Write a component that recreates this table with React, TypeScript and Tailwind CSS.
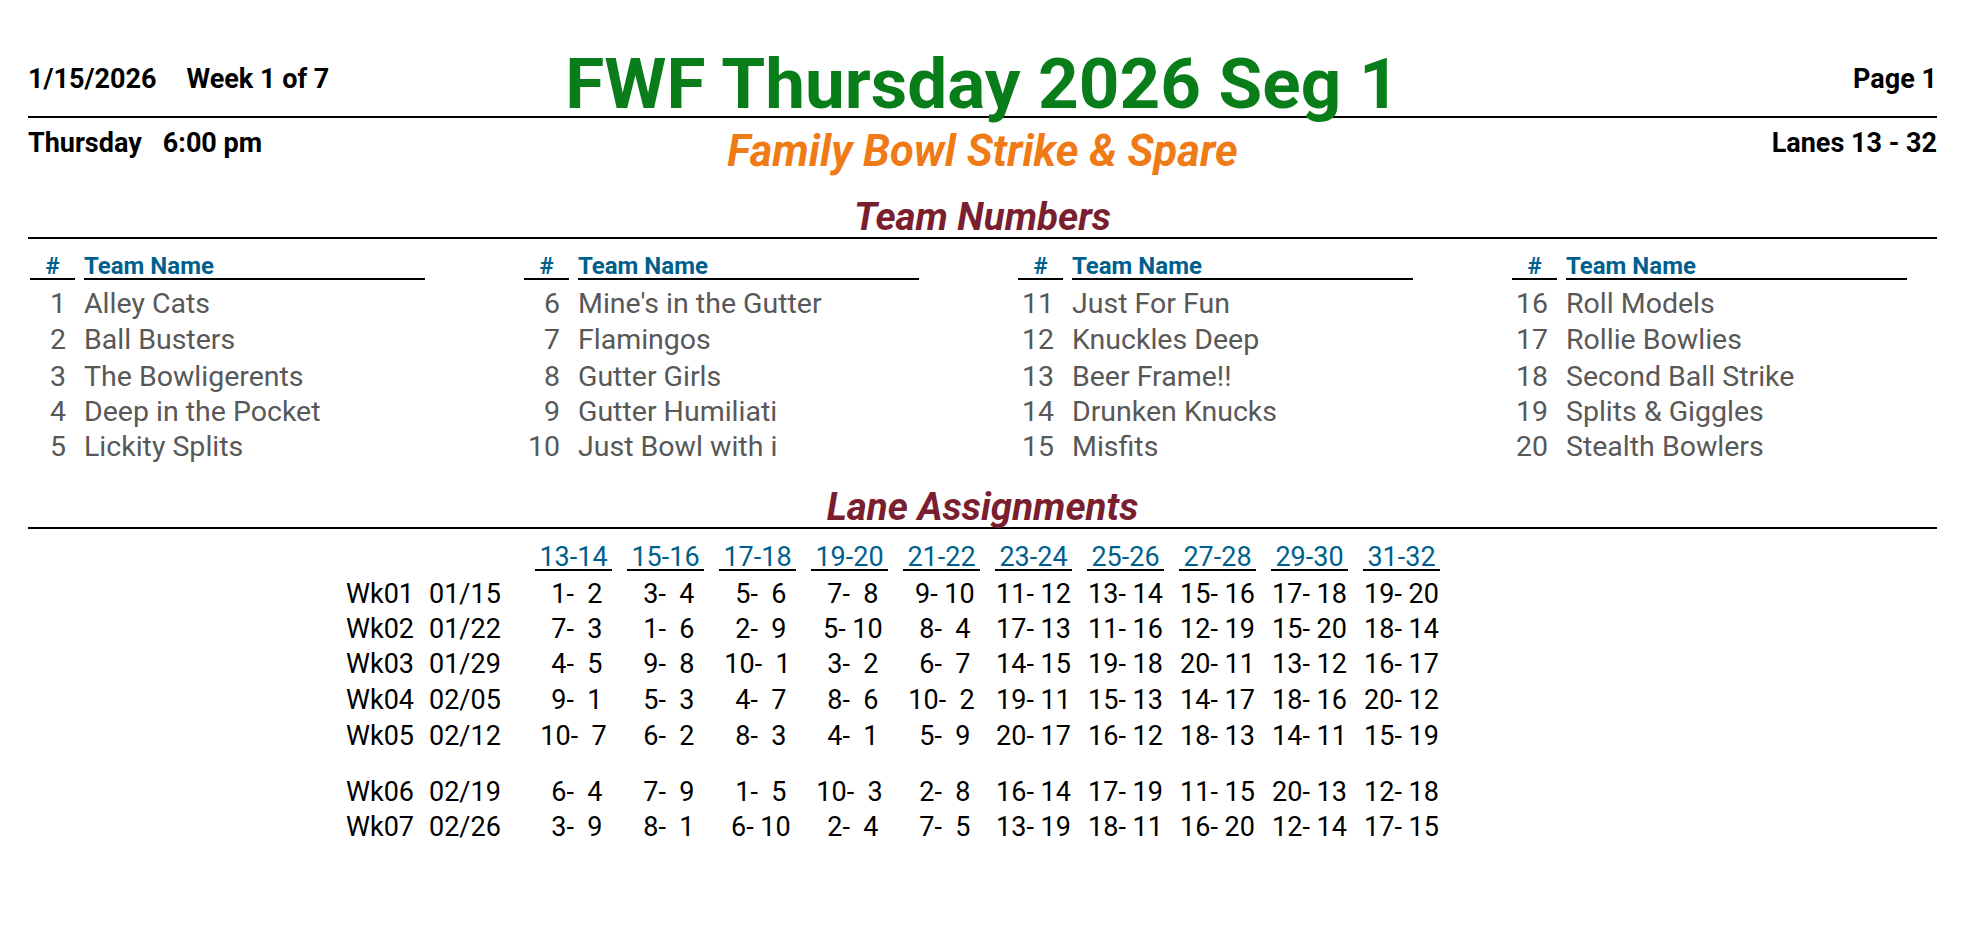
const teams = [
  "Alley Cats",
  "Ball Busters",
  "The Bowligerents",
  "Deep in the Pocket",
  "Lickity Splits",
  "Mine's in the Gutter",
  "Flamingos",
  "Gutter Girls",
  "Gutter Humiliati",
  "Just Bowl with i",
  "Just For Fun",
  "Knuckles Deep",
  "Beer Frame!!",
  "Drunken Knucks",
  "Misfits",
  "Roll Models",
  "Rollie Bowlies",
  "Second Ball Strike",
  "Splits & Giggles",
  "Stealth Bowlers",
];

const lanes = ["13-14", "15-16", "17-18", "19-20", "21-22", "23-24", "25-26", "27-28", "29-30", "31-32"];

// row heights are a bit uneven on the printed sheet
const teamRowH = ["h-[35px] leading-[35px]", "h-[38px] leading-[38px]", "h-[35px] leading-[35px]", "h-[35px] leading-[35px]", "h-[35px] leading-[35px]"];

const weeks: { wk: string; date: string; pairs: [number, number][]; row: string }[] = [
  { wk: "Wk01", date: "01/15", row: "h-[35px] leading-[35px]", pairs: [[1, 2], [3, 4], [5, 6], [7, 8], [9, 10], [11, 12], [13, 14], [15, 16], [17, 18], [19, 20]] },
  { wk: "Wk02", date: "01/22", row: "h-[35px] leading-[35px]", pairs: [[7, 3], [1, 6], [2, 9], [5, 10], [8, 4], [17, 13], [11, 16], [12, 19], [15, 20], [18, 14]] },
  { wk: "Wk03", date: "01/29", row: "h-[35.5px] leading-[35.5px]", pairs: [[4, 5], [9, 8], [10, 1], [3, 2], [6, 7], [14, 15], [19, 18], [20, 11], [13, 12], [16, 17]] },
  { wk: "Wk04", date: "02/05", row: "h-[37px] leading-[37px]", pairs: [[9, 1], [5, 3], [4, 7], [8, 6], [10, 2], [19, 11], [15, 13], [14, 17], [18, 16], [20, 12]] },
  { wk: "Wk05", date: "02/12", row: "h-[34px] leading-[34px]", pairs: [[10, 7], [6, 2], [8, 3], [4, 1], [5, 9], [20, 17], [16, 12], [18, 13], [14, 11], [15, 19]] },
  { wk: "Wk06", date: "02/19", row: "h-[35px] leading-[35px] mt-[21.5px]", pairs: [[6, 4], [7, 9], [1, 5], [10, 3], [2, 8], [16, 14], [17, 19], [11, 15], [20, 13], [12, 18]] },
  { wk: "Wk07", date: "02/26", row: "h-[35px] leading-[35px]", pairs: [[3, 9], [8, 1], [6, 10], [2, 4], [7, 5], [13, 19], [18, 11], [16, 20], [12, 14], [17, 15]] },
];

// "%2d-%3d" like the printout
const pairText = (a: number, b: number) => `${a < 10 ? " " : ""}${a}-${b < 10 ? "  " : " "}${b}`;

function SectionTitle({ children }: { children: string }) {
  return (
    <div className="h-[40px] leading-[40px] text-center text-[38.5px] font-bold italic text-[#7a1f30] border-b-2 border-black box-content">
      {children}
    </div>
  );
}

export default function App() {
  return (
    <div className="w-[1972px] h-[942px] bg-white pl-[28px] pr-[35px] font-['Roboto',sans-serif] text-black">
      {/* Header */}
      <div className="grid grid-cols-[1fr_auto_1fr] h-[116px] border-b-2 border-black box-content">
        <div className="pt-[61px] h-[36px] leading-[36px] text-[27px] font-bold whitespace-nowrap box-content">
          1/15/2026<span className="ml-[30px]">Week 1 of 7</span>
        </div>
        <div className="pt-[48px] h-[72px] leading-[72px] text-[71px] font-bold text-[#0a7d1b] whitespace-nowrap box-content">
          FWF Thursday 2026 Seg 1
        </div>
        <div className="pt-[61px] h-[36px] leading-[36px] text-[27px] font-bold text-right box-content">Page 1</div>
      </div>
      <div className="grid grid-cols-[1fr_auto_1fr] h-[62px]">
        <div className="pt-[7px] h-[36px] leading-[36px] text-[27px] font-bold whitespace-nowrap box-content">
          Thursday<span className="ml-[21px]">6:00 pm</span>
        </div>
        <div className="pt-[14px] h-[40px] leading-[40px] text-[43.5px] font-bold italic text-[#ef7b16] whitespace-nowrap box-content">
          Family Bowl Strike &amp; Spare
        </div>
        <div className="pt-[7px] h-[36px] leading-[36px] text-[27px] font-bold text-right box-content">Lanes 13 - 32</div>
      </div>

      {/* Team Numbers */}
      <div className="pt-[17px]">
        <SectionTitle>Team Numbers</SectionTitle>
      </div>
      <div className="ml-[2px] mt-[15px] grid grid-cols-[repeat(4,494px)]">
        {[0, 1, 2, 3].map((col) => (
          <div key={col}>
            <div className="flex gap-[9px] text-[24px] font-bold text-[#005f8c] leading-[24px]">
              <div className="w-[45px] h-[24px] text-center border-b-2 border-black box-content">#</div>
              <div className="w-[341px] h-[24px] border-b-2 border-black box-content">Team Name</div>
            </div>
            <div className="mt-[5.5px] text-[28.5px] text-[#585858]">
              {teams.slice(col * 5, col * 5 + 5).map((name, i) => (
                <div key={name} className={`flex gap-[9px] ${teamRowH[i]}`}>
                  <div className="w-[45px] pr-[9px] text-right">{col * 5 + i + 1}</div>
                  <div className="w-[341px] whitespace-nowrap">{name}</div>
                </div>
              ))}
            </div>
          </div>
        ))}
      </div>

      {/* Lane Assignments */}
      <div className="mt-[23.5px]">
        <SectionTitle>Lane Assignments</SectionTitle>
      </div>
      <div className="ml-[318px] mt-[16px] text-[27px]">
        <div className="flex">
          <div className="w-[189px]" />
          <div className="flex gap-[15px] text-[#005f8c]">
            {lanes.map((l) => (
              <div key={l} className="w-[77px] h-[24px] leading-[24px] text-center border-b-2 border-black box-content">
                {l}
              </div>
            ))}
          </div>
        </div>
        <div className="mt-[5.5px]">
          {weeks.map((w) => (
            <div key={w.wk} className={`flex whitespace-nowrap ${w.row}`}>
              <div className="w-[83px]">{w.wk}</div>
              <div className="w-[106px]">{w.date}</div>
              <div className="flex gap-[15px]">
                {w.pairs.map(([a, b], i) => (
                  <div key={i} className="w-[77px] text-center whitespace-pre">
                    {pairText(a, b)}
                  </div>
                ))}
              </div>
            </div>
          ))}
        </div>
      </div>
    </div>
  );
}
